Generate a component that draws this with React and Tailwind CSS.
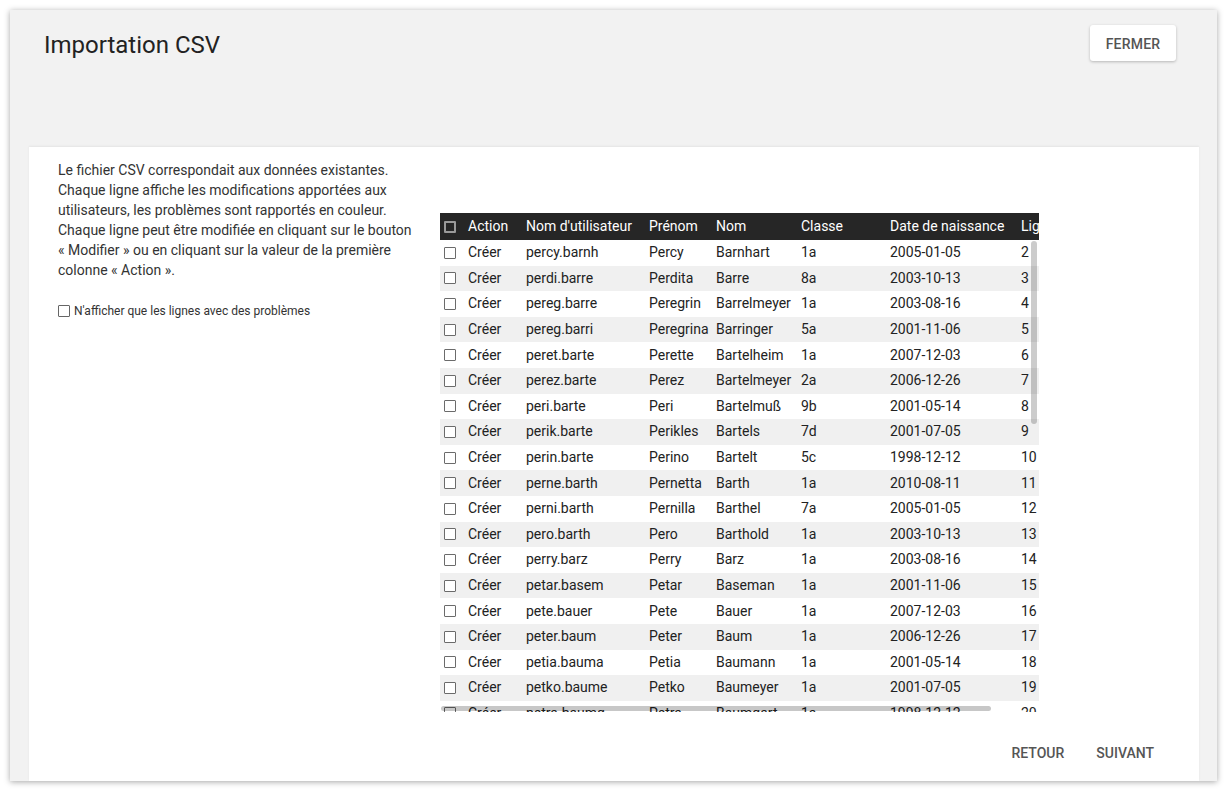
import React from "react";

const rows = [
  ["percy.barnh", "Percy", "Barnhart", "1a", "2005-01-05", "2"],
  ["perdi.barre", "Perdita", "Barre", "8a", "2003-10-13", "3"],
  ["pereg.barre", "Peregrin", "Barrelmeyer", "1a", "2003-08-16", "4"],
  ["pereg.barri", "Peregrina", "Barringer", "5a", "2001-11-06", "5"],
  ["peret.barte", "Perette", "Bartelheim", "1a", "2007-12-03", "6"],
  ["perez.barte", "Perez", "Bartelmeyer", "2a", "2006-12-26", "7"],
  ["peri.barte", "Peri", "Bartelmuß", "9b", "2001-05-14", "8"],
  ["perik.barte", "Perikles", "Bartels", "7d", "2001-07-05", "9"],
  ["perin.barte", "Perino", "Bartelt", "5c", "1998-12-12", "10"],
  ["perne.barth", "Pernetta", "Barth", "1a", "2010-08-11", "11"],
  ["perni.barth", "Pernilla", "Barthel", "7a", "2005-01-05", "12"],
  ["pero.barth", "Pero", "Barthold", "1a", "2003-10-13", "13"],
  ["perry.barz", "Perry", "Barz", "1a", "2003-08-16", "14"],
  ["petar.basem", "Petar", "Baseman", "1a", "2001-11-06", "15"],
  ["pete.bauer", "Pete", "Bauer", "1a", "2007-12-03", "16"],
  ["peter.baum", "Peter", "Baum", "1a", "2006-12-26", "17"],
  ["petia.bauma", "Petia", "Baumann", "1a", "2001-05-14", "18"],
  ["petko.baume", "Petko", "Baumeyer", "1a", "2001-07-05", "19"],
  ["petra.baumg", "Petra", "Baumgart", "1a", "1998-12-12", "20"],
];

function Box({ dark }) {
  return (
    <span
      className={
        dark
          ? "block w-[12px] h-[12px] border-2 border-[#9a9a9a] bg-[#262626] rounded-[1px]"
          : "block w-[12px] h-[12px] border-[1.5px] border-[#6b6b6b] bg-white rounded-[1px]"
      }
    />
  );
}

function Row({ cells, dark }) {
  return (
    <div className="flex items-center whitespace-nowrap w-full">
      <div className="w-[28px] shrink-0 pl-[4px] flex items-center">
        <Box dark={dark} />
      </div>
      <div className="w-[58px] shrink-0">{cells[0]}</div>
      <div className="w-[123px] shrink-0">{cells[1]}</div>
      <div className="w-[67px] shrink-0">{cells[2]}</div>
      <div className="w-[85px] shrink-0">{cells[3]}</div>
      <div className="w-[89px] shrink-0">{cells[4]}</div>
      <div className="w-[131px] shrink-0">{cells[5]}</div>
      <div className="w-[60px] shrink-0">{cells[6]}</div>
    </div>
  );
}

export default function App() {
  return (
    <div
      className="w-[1227px] h-[791px] bg-white p-[10px] overflow-hidden"
      style={{ fontFamily: "Roboto, 'Liberation Sans', sans-serif" }}
    >
      <div className="w-[1207px] h-[771px] bg-[#f2f2f2] shadow-[0_1px_6px_rgba(0,0,0,0.35)] flex flex-col">
        <div className="h-[137px] shrink-0 flex justify-between pl-[34px] pr-[41px]">
          <h1 className="text-[24px] leading-[32px] text-[#222] mt-[19px]">Importation CSV</h1>
          <button className="mt-[15px] h-[36px] w-[86px] pt-[3px] bg-white rounded-[3px] shadow-[0_1px_3px_rgba(0,0,0,0.25)] text-[14px] font-medium text-[#555] tracking-[0.2px]">
            FERMER
          </button>
        </div>
        <div className="flex-1 ml-[19px] mr-[18px] bg-white shadow-[0_-1px_2px_rgba(0,0,0,0.06)] flex flex-col">
          <div className="flex-1 flex pl-[29px] pt-[13px]">
            <div className="w-[360px] shrink-0">
              <p className="text-[14px] leading-[20px] text-[#333]">
                Le fichier CSV correspondait aux données existantes. Chaque ligne affiche les modifications apportées aux utilisateurs, les problèmes sont rapportés en couleur. Chaque ligne peut être modifiée en cliquant sur le bouton « Modifier » ou en cliquant sur la valeur de la première colonne « Action ».
              </p>
              <label className="flex items-center gap-[4px] mt-[23px] text-[12px] leading-[16px] text-[#333]">
                <span className="block w-[12px] h-[12px] border-[1.5px] border-[#666] bg-white rounded-[1px]" />
                N'afficher que les lignes avec des problèmes
              </label>
            </div>
            <div className="ml-[22px] mt-[53px] w-[599px] h-[499px] overflow-hidden relative text-[14px] text-[#222]">
              <div className="h-[27px] bg-[#262626] text-white flex items-center">
                <Row dark cells={["Action", "Nom d'utilisateur", "Prénom", "Nom", "Classe", "Date de naissance", "Ligne"]} />
              </div>
              {rows.map((r, i) => (
                <div key={i} className={`h-[25.6px] flex items-center ${i % 2 === 1 ? "bg-[#f0f0f0]" : "bg-white"}`}>
                  <Row cells={["Créer", ...r]} />
                </div>
              ))}
              <div className="absolute left-[591px] top-[28px] w-[6px] h-[183px] rounded-full bg-[rgba(0,0,0,0.2)]" />
              <div className="absolute left-[1px] top-[493px] w-[550px] h-[5px] rounded-full bg-[rgba(0,0,0,0.22)]" />
            </div>
          </div>
          <div className="h-[58px] shrink-0 flex justify-end items-center pr-[29px]">
            <button className="h-[36px] px-[16px] pt-[2px] text-[14px] font-medium text-[#555]">RETOUR</button>
            <button className="h-[36px] px-[16px] pt-[2px] text-[14px] font-medium text-[#555]">SUIVANT</button>
          </div>
        </div>
      </div>
    </div>
  );
}
